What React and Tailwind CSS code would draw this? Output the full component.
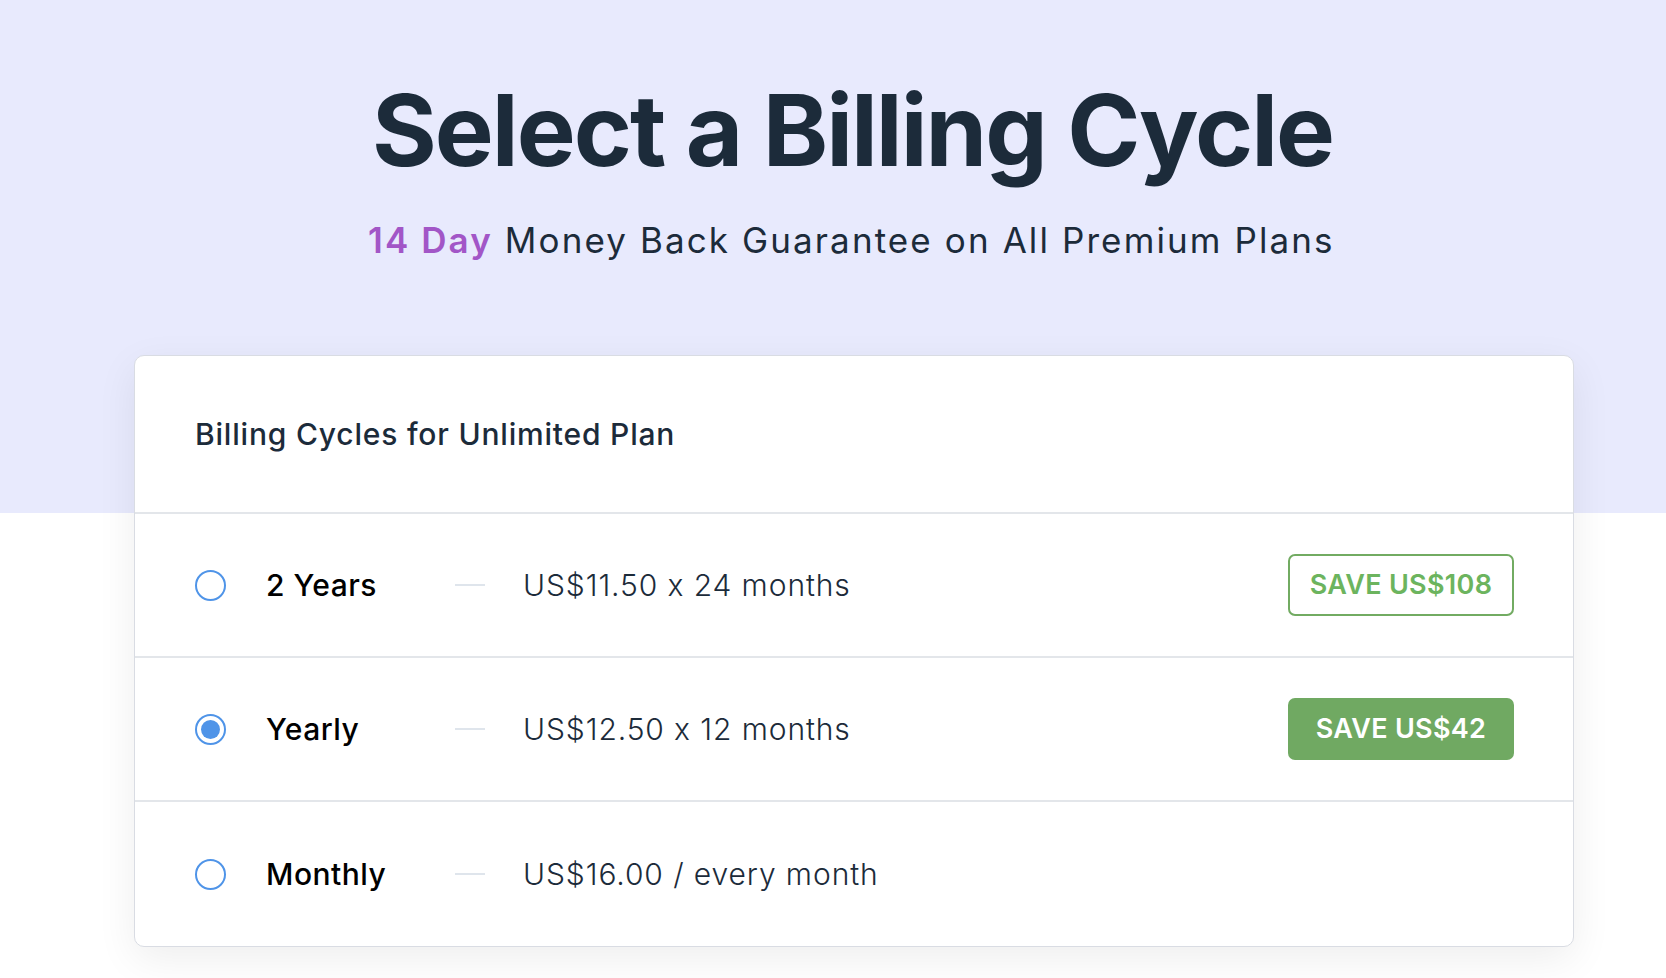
import React from 'react'

// Billing cycle options for the Unlimited plan
const CYCLES = [
  { id: '2y', label: '2 Years', price: 'US$11.50 x 24 months', save: 'SAVE US$108', selected: false },
  { id: '1y', label: 'Yearly', price: 'US$12.50 x 12 months', save: 'SAVE US$42', selected: true },
  { id: '1m', label: 'Monthly', price: 'US$16.00 / every month', save: null, selected: false },
]

function Radio({ checked }) {
  return (
    <span className="flex items-center justify-center w-[31px] h-[31px] rounded-full border-2 border-[#4f94e8] shrink-0">
      {checked && <span className="w-[19px] h-[19px] rounded-full bg-[#4f94e8]" />}
    </span>
  )
}

function CycleRow({ cycle, last }) {
  return (
    <div className={`flex items-center h-[144px] pl-[60px] pr-[59px] ${last ? '' : 'border-b-2 border-[#e3e6ea]'}`}>
      <Radio checked={cycle.selected} />
      <span className="ml-[40px] w-[189px] text-[30px] font-medium tracking-[0.5px] text-black">{cycle.label}</span>
      <span className="w-[30px] h-[2px] bg-[#dfe5ec]" />
      <span className="ml-[38px] text-[30px] font-light tracking-[0.9px] text-[#1c2b3a]">{cycle.price}</span>
      {cycle.save && (
        <span
          className={`ml-auto flex items-center justify-center w-[226px] h-[62px] rounded-[7px] text-[27px] font-semibold tracking-[0.3px] ${
            cycle.selected
              ? 'bg-[#70a962] text-white'
              : 'border-2 border-[#72ab62] text-[#6cb45e]'
          }`}
        >
          {cycle.save}
        </span>
      )}
    </div>
  )
}

export default function App() {
  return (
    <div
      className="relative w-[1666px] h-[978px] bg-white overflow-hidden [font-feature-settings:'calt'_0]"
      style={{ fontFamily: 'Inter, "Noto Sans", sans-serif' }}
    >
      {/* lavender hero band */}
      <div className="absolute inset-x-0 top-0 h-[513px] bg-[#e8eafd]" />

      <div className="relative flex flex-col">
        <h1 className="mt-[70px] ml-[372px] text-[99px] leading-[120px] font-bold tracking-[-0.02em] text-[#1c2b3a]">
          Select a Billing Cycle
        </h1>
        <p className="mt-[30px] ml-[368px] text-[35px] leading-[41px] tracking-[2.1px] text-[#1c2b3a]">
          <span className="font-semibold text-[#a256c7]">14 Day</span> Money Back Guarantee on All Premium Plans
        </p>

        <div className="mt-[94px] ml-[134px] w-[1440px] bg-white rounded-[10px] border border-[#d9dce3] shadow-[0_12px_40px_rgba(0,0,0,0.07)] overflow-hidden">
          <div className="h-[158px] flex items-center pl-[60px] border-b-2 border-[#e3e6ea]">
            <span className="text-[30px] font-medium tracking-[0.8px] text-[#1c2b3a]">Billing Cycles for Unlimited Plan</span>
          </div>
          {CYCLES.map((c, i) => (
            <CycleRow key={c.id} cycle={c} last={i === CYCLES.length - 1} />
          ))}
        </div>
      </div>
    </div>
  )
}
